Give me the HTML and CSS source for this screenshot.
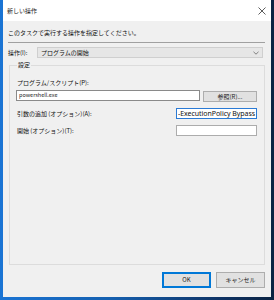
FILE: index.html
```html
<!DOCTYPE html>
<html lang="ja">
<head>
<meta charset="utf-8">
<title>新しい操作</title>
<link rel="stylesheet" href="styles.css">
</head>
<body>
<div class="window">
  <div class="titlebar">
    <span class="title">新しい操作</span>
    <svg class="close" width="8" height="8" viewBox="0 0 8 8"><path d="M0.5 0.5 L7.5 7.5 M7.5 0.5 L0.5 7.5" stroke="#333" stroke-width="0.8" fill="none"/></svg>
  </div>
  <div class="content">
    <div class="instruction">このタスクで実行する操作を指定してください。</div>
    <div class="separator"></div>
    <div class="action-row">
      <span class="action-label">操作(I):</span>
      <div class="combo">
        <span>プログラムの開始</span>
        <svg width="6" height="4" viewBox="0 0 6 4"><path d="M0.5 0.8 L3 3.2 L5.5 0.8" stroke="#555" stroke-width="0.7" fill="none"/></svg>
      </div>
    </div>
    <fieldset class="group">
      <legend>設定</legend>
      <div class="field-label">プログラム/スクリプト(P):</div>
      <div class="program-row">
        <div class="input wide">powershell.exe</div>
        <div class="btn browse">参照(R)...</div>
      </div>
      <div class="opt-row first">
        <span class="opt-label">引数の追加 (オプション)(A):</span>
        <div class="input narrow args"><span>-ExecutionPolicy Bypass</span></div>
      </div>
      <div class="opt-row">
        <span class="opt-label">開始 (オプション)(T):</span>
        <div class="input narrow"></div>
      </div>
    </fieldset>
    <div class="buttons">
      <div class="btn dlg ok">OK</div>
      <div class="btn dlg">キャンセル</div>
    </div>
  </div>
</div>
</body>
</html>
```
FILE: styles.css
```css
html, body {
  margin: 0;
  padding: 0;
}
body {
  width: 274px;
  height: 300px;
  overflow: hidden;
  background: linear-gradient(to right, #1a74d4 0%, #1560b0 40%, #0f3466 80%, #0b2342 100%);
  font-family: "Noto Sans CJK JP", "Noto Sans", sans-serif;
  font-size: 6px;
  color: #111;
}
.window {
  width: 268px;
  height: 297px;
  margin-left: 3px;
  background: #f0f0f0;
  display: flex;
  flex-direction: column;
}
.titlebar {
  height: 21px;
  flex: none;
  background: #ffffff;
  display: flex;
  align-items: center;
  justify-content: space-between;
  padding: 0 5px 0 4px;
}
.title {
  font-size: 6px;
  line-height: 8px;
  color: #222;
}
.close {
  display: block;
}
.content {
  flex: 1;
  display: flex;
  flex-direction: column;
  padding: 0 6px 0 5px;
}
.instruction {
  margin-top: 8px;
  line-height: 8px;
}
.separator {
  margin-top: 5px;
  height: 1px;
  background: #a0a0a0;
}
.action-row {
  margin-top: 4px;
  display: flex;
  align-items: center;
}
.action-label {
  width: 29px;
  line-height: 8px;
}
.combo {
  width: 218px;
  height: 9px;
  border: 1px solid #cfcfcf;
  background: #e6e6e6;
  display: flex;
  align-items: center;
  justify-content: space-between;
  padding: 0 3px 0 3px;
  line-height: 8px;
}
.combo svg {
  display: block;
}
.group {
  flex: 1;
  min-height: 0;
  margin: 3px 0 0 1px;
  padding: 10px 7px 0 6px;
  border: 1px solid #dcdcdc;
  display: flex;
  flex-direction: column;
}
.group legend {
  padding: 0 1px;
  margin-left: 1px;
  line-height: 8px;
  font-size: 6px;
}
.field-label {
  line-height: 8px;
  padding-left: 1px;
}
.program-row {
  margin-top: 3px;
  display: flex;
  align-items: flex-start;
  justify-content: space-between;
}
.input {
  box-sizing: border-box;
  background: #ffffff;
  border: 1px solid #8a8a8a;
  height: 11px;
  line-height: 9px;
  padding: 0 2px;
  overflow: hidden;
  white-space: nowrap;
}
.input.wide {
  width: 184px;
  font-size: 5.5px;
  color: #222;
}
.input.narrow {
  width: 81px;
  border-color: #acacac;
}
.input.args {
  border-color: #2a7ad5;
  padding: 0 1px 0 0;
  font-family: "Noto Sans", sans-serif;
  font-size: 7px;
  direction: rtl;
}
.input.args span {
  direction: ltr;
  unicode-bidi: isolate;
  letter-spacing: -0.05px;
}
.btn {
  box-sizing: border-box;
  background: #e1e1e1;
  border: 1px solid #adadad;
  display: flex;
  align-items: center;
  justify-content: center;
  line-height: 8px;
  color: #222;
}
.browse {
  width: 54px;
  height: 11px;
  margin-top: 1px;
}
.opt-row {
  margin-top: 6px;
  display: flex;
  align-items: center;
  justify-content: space-between;
  padding-left: 1px;
}
.opt-row.first {
  margin-top: 6px;
}
.opt-label {
  line-height: 8px;
}
.buttons {
  flex: none;
  margin: 7px 0 9px 0;
  display: flex;
  justify-content: flex-end;
  gap: 5px;
}
.dlg {
  width: 49px;
  height: 16px;
}
.ok {
  border: 1px solid #0078d7;
  box-shadow: inset 0 0 0 1px #0078d7;
}
```
